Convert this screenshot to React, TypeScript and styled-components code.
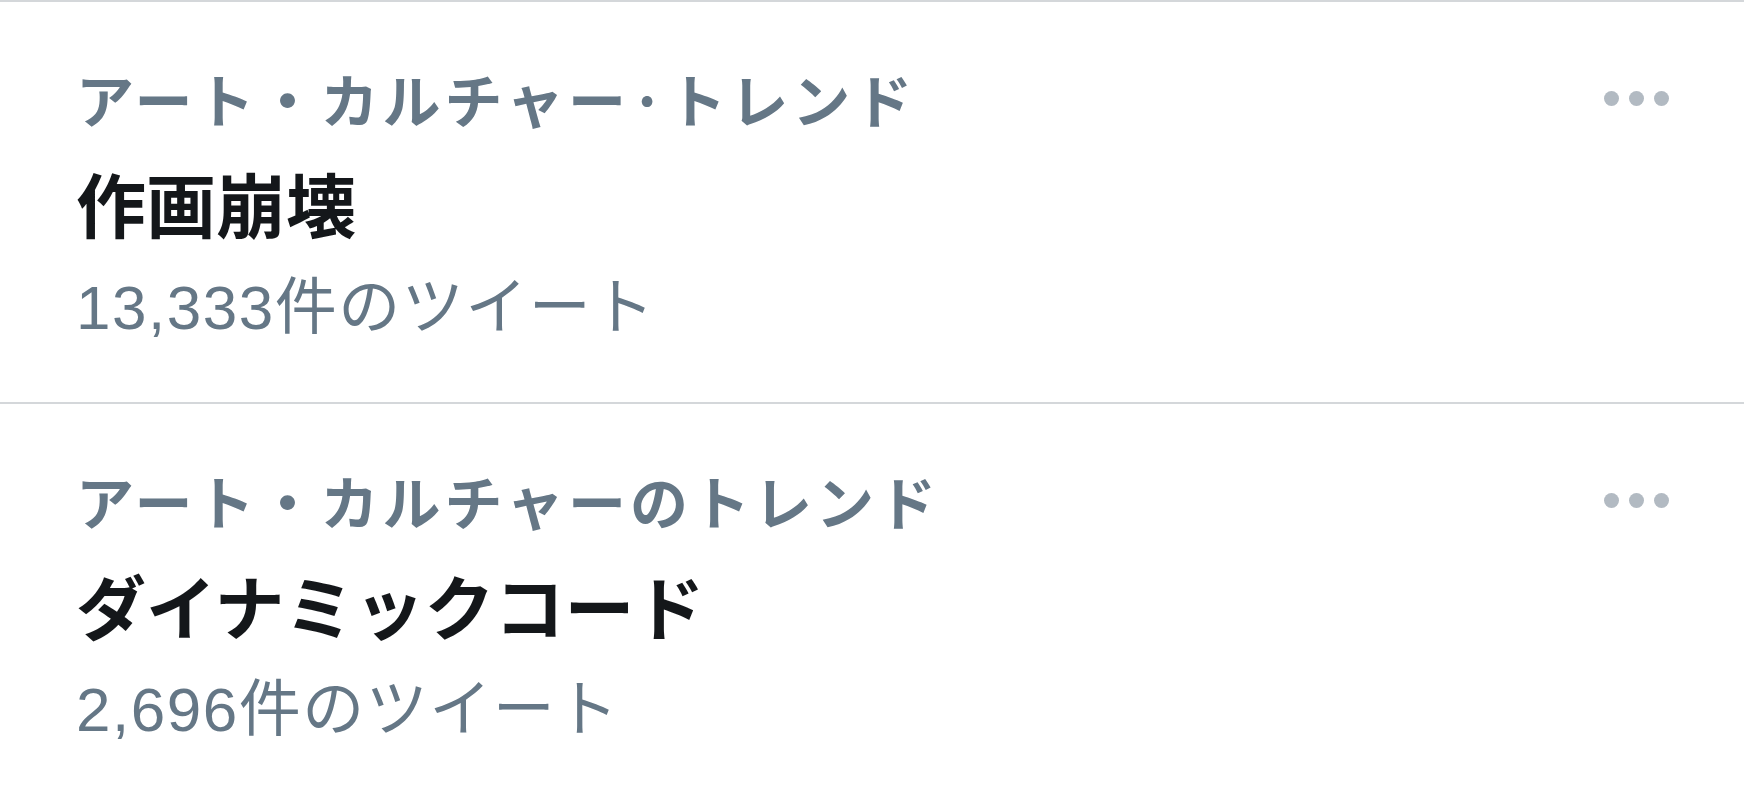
import styled, { createGlobalStyle } from "styled-components";

const GlobalStyle = createGlobalStyle`
  body {
    margin: 0;
    background: #ffffff;
    font-family: "Noto Sans CJK JP", "Noto Sans", sans-serif;
  }
`;

const StyledList = styled.div`
  width: 1744px;
  border-top: 2px solid #d4d7da;
`;

const StyledTrend = styled.div`
  display: flex;
  align-items: flex-start;
  justify-content: space-between;
  padding: 44px 75px 42px 76px;
  border-bottom: 2px solid #d4d7da;
`;

const StyledInfo = styled.div`
  display: flex;
  flex-direction: column;
`;

const StyledCategory = styled.div`
  font-size: 58px;
  line-height: 104px;
  font-weight: 600;
  color: #657786;
  letter-spacing: 4px;
`;

const StyledTitle = styled.div`
  font-size: 70px;
  line-height: 106px;
  font-weight: 700;
  color: #14171a;
`;

const StyledCount = styled.div`
  font-family: "Liberation Sans", "Noto Sans CJK JP", sans-serif;
  font-size: 62px;
  line-height: 104px;
  font-weight: 400;
  color: #657786;
  letter-spacing: 1.5px;
`;

const StyledMore = styled.div`
  display: flex;
  gap: 10px;
  height: 104px;
  align-items: center;
`;

const StyledDot = styled.span`
  width: 15px;
  height: 15px;
  border-radius: 50%;
  background: #b2bac2;
`;

const trends = [
  { category: "アート・カルチャー·トレンド", title: "作画崩壊", count: "13,333件のツイート" },
  { category: "アート・カルチャーのトレンド", title: "ダイナミックコード", count: "2,696件のツイート" },
];

export default function App() {
  return (
    <>
      <GlobalStyle />
      <StyledList>
        {trends.map((t) => (
          <StyledTrend key={t.title}>
            <StyledInfo>
              <StyledCategory>{t.category}</StyledCategory>
              <StyledTitle>{t.title}</StyledTitle>
              <StyledCount>{t.count}</StyledCount>
            </StyledInfo>
            <StyledMore>
              <StyledDot />
              <StyledDot />
              <StyledDot />
            </StyledMore>
          </StyledTrend>
        ))}
      </StyledList>
    </>
  );
}
